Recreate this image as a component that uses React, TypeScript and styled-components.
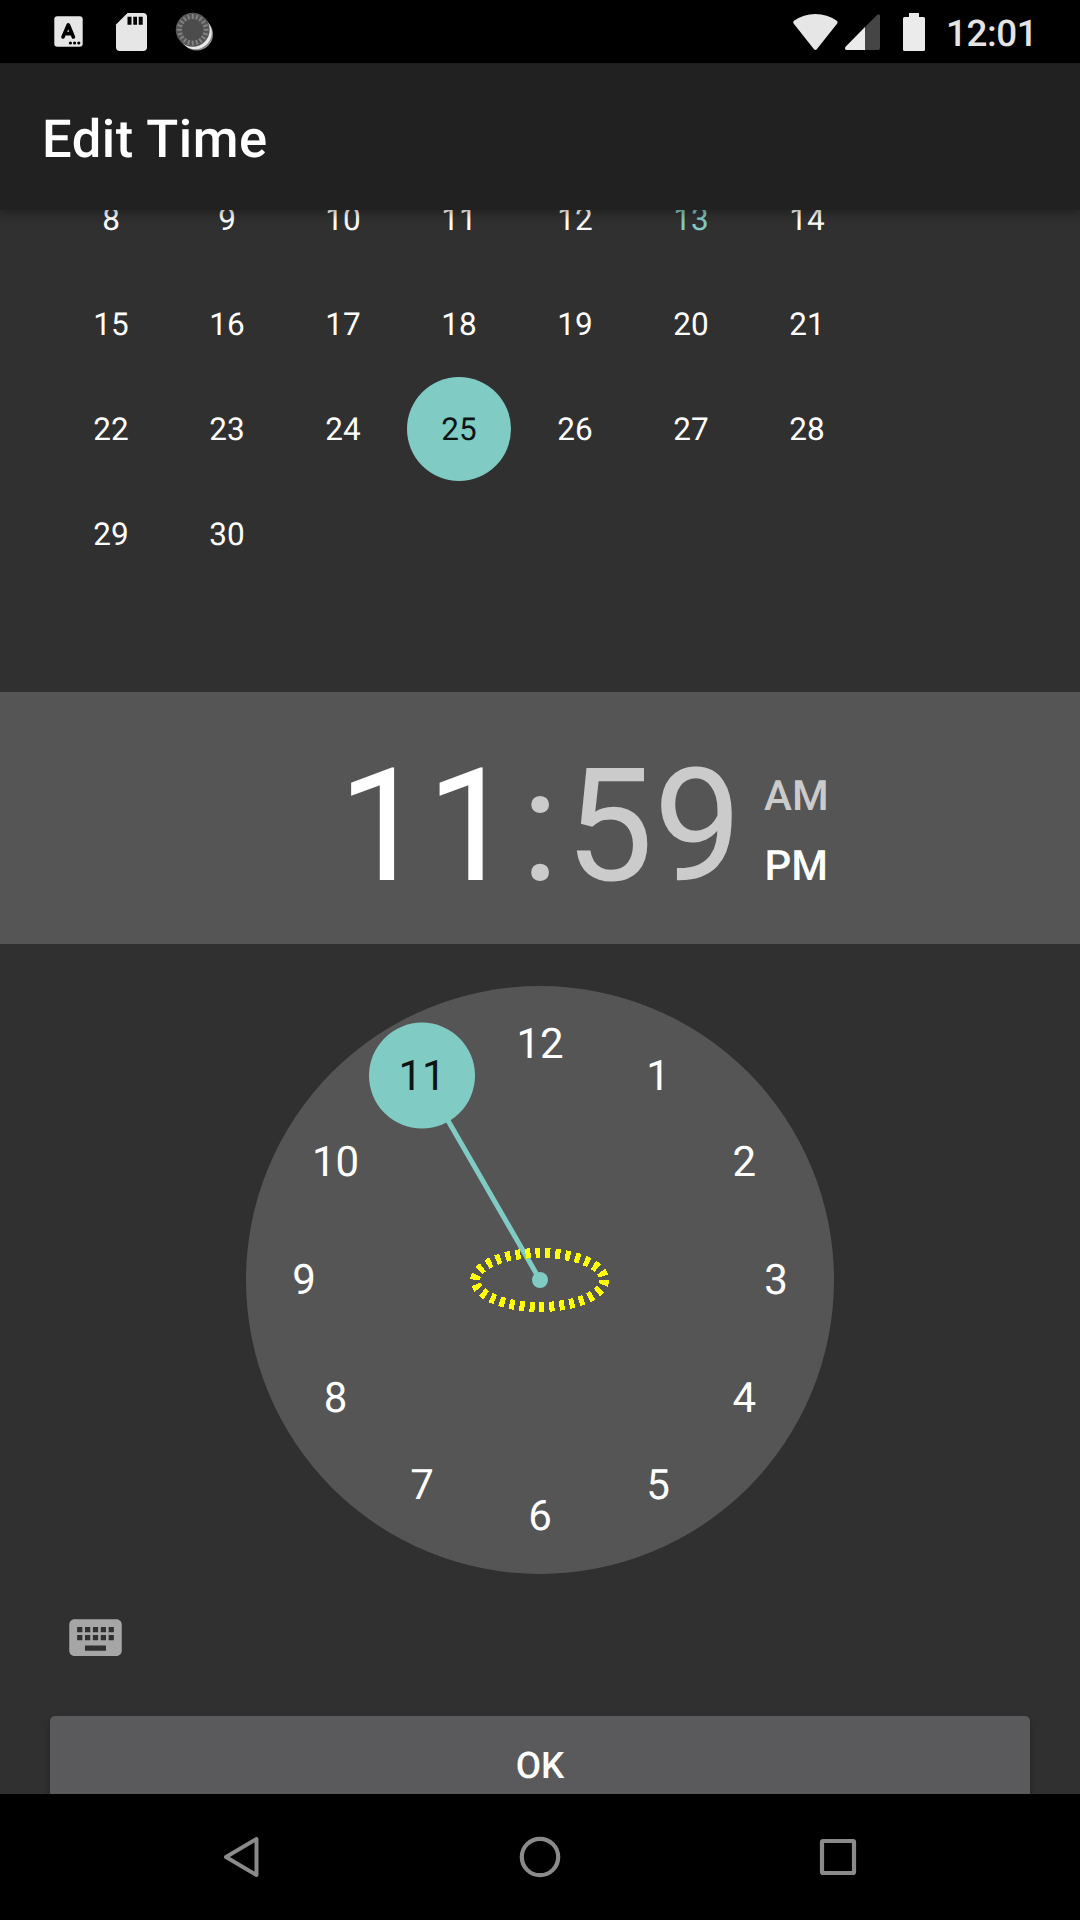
import React from "react";
import styled, { createGlobalStyle } from "styled-components";

const GlobalStyle = createGlobalStyle`
  * { box-sizing: border-box; }
  body { margin: 0; background: #000; }
`;

const ACCENT = "#80cbc4";

const Screen = styled.div`
  width: 1080px;
  height: 1920px;
  display: flex;
  flex-direction: column;
  overflow: hidden;
  background: #303030;
  color: #fff;
  font-family: Roboto, "Noto Sans", sans-serif;
  text-rendering: geometricPrecision;
`;

const StatusBar = styled.header`
  flex: none;
  height: 63px;
  padding: 0 44px 0 54px;
  display: flex;
  align-items: center;
  justify-content: space-between;
  background: #000;
`;

const IconGroup = styled.div<{ $gap: number }>`
  display: flex;
  align-items: center;
  gap: ${(p) => p.$gap}px;
`;

const Clock = styled.span`
  width: 90px;
  margin-left: 14px;
  padding-top: 4px;
  font-size: 36.75px;
  line-height: 44px;
  font-weight: 500;
  letter-spacing: -0.4px;
  color: #e4e4e4;
`;

const Glyph = styled.svg`
  display: block;
  flex: none;
  overflow: visible;
`;

const AppBar = styled.div`
  flex: none;
  position: relative;
  z-index: 1;
  height: 147px;
  padding: 4px 42px 0;
  display: flex;
  align-items: center;
  background: #212121;
  box-shadow: 0 4px 10px rgba(0, 0, 0, 0.32);
`;

const Title = styled.h1`
  margin: 0;
  font-size: 52.5px;
  font-weight: 500;
  letter-spacing: 0.55px;
`;

const Content = styled.main`
  flex: 1;
  min-height: 0;
  display: flex;
  flex-direction: column;
  overflow: hidden;
`;

const Calendar = styled.section`
  flex: none;
  height: 482px;
`;

const Month = styled.div`
  margin: -43.5px 0 0 53px;
  display: grid;
  grid-template-columns: repeat(7, 116px);
  grid-auto-rows: 105px;
  place-items: center;
`;

const Day = styled.div<{ $selected?: boolean; $today?: boolean }>`
  width: 104px;
  height: 104px;
  border-radius: 50%;
  display: flex;
  align-items: center;
  justify-content: center;
  font-size: 31.5px;
  background: ${(p) => (p.$selected ? ACCENT : "transparent")};
  color: ${(p) => (p.$selected ? "#0d1414" : p.$today ? ACCENT : "#fff")};
`;

const TimeHeader = styled.section`
  flex: none;
  height: 252px;
  padding-top: 43px;
  display: grid;
  grid-template-columns: 1fr 50px 1fr;
  align-items: start;
  background: #555;
`;

const TimePart = styled.span<{ $active?: boolean; $align?: string }>`
  font-size: 157.5px;
  line-height: 184px;
  text-align: ${(p) => p.$align ?? "left"};
  color: ${(p) => (p.$active ? "#fff" : "#cbcbcb")};
`;

const MinuteSide = styled.div`
  display: flex;
  align-items: flex-start;
`;

const Periods = styled.div`
  margin-left: 22px;
  padding-top: 27px;
  display: flex;
  flex-direction: column;
  align-items: center;
`;

const Period = styled.span<{ $active?: boolean }>`
  font-size: 42px;
  line-height: 70px;
  font-weight: 500;
  color: ${(p) => (p.$active ? "#fff" : "#cbcbcb")};
`;

const DialArea = styled.section`
  flex: none;
  padding-top: 42px;
  display: flex;
  justify-content: center;
`;

const DialText = styled.text<{ $active?: boolean }>`
  font-size: 42px;
  text-anchor: middle;
  fill: ${(p) => (p.$active ? "#0d1414" : "#fff")};
`;

const InputModeRow = styled.div`
  flex: none;
  padding: 32px 0 0 64px;
`;

const ButtonRow = styled.div`
  flex: none;
  padding: 47px 50px 0;
`;

const OkButton = styled.button`
  display: block;
  width: 100%;
  height: 98px;
  padding: 0;
  border: 0;
  border-radius: 5px;
  background: #5a5a5c;
  color: #fff;
  font: 500 36.75px Roboto, sans-serif;
  text-rendering: inherit;
  box-shadow: 0 5px 7px rgba(0, 0, 0, 0.3);
`;

const NavBar = styled.nav`
  flex: none;
  height: 126px;
  display: grid;
  grid-template-columns: repeat(3, 298px);
  justify-content: center;
  place-items: center;
  background: #000;
`;

const DAYS = Array.from({ length: 23 }, (_, i) => i + 8);
const HOURS = [12, 1, 2, 3, 4, 5, 6, 7, 8, 9, 10, 11];
const SELECTED_HOUR = 11;
const NUMBER_RADIUS = 236;

const hourPoint = (hour: number) => {
  const angle = (hour * Math.PI) / 6;
  return {
    x: 294 + NUMBER_RADIUS * Math.sin(angle),
    y: 294 - NUMBER_RADIUS * Math.cos(angle),
  };
};

function KeyboardLanguageIcon() {
  return (
    <Glyph width="29" height="31" viewBox="0 0 29 31">
      <rect x="0.3" y="0.3" width="28.4" height="30.4" rx="3" fill="#e6e6e6" />
      <path d="M9 21 L14.3 8.8 L19.4 21 M10.6 17.6 H18" fill="none" stroke="#000" strokeWidth="3.6" strokeLinecap="round" strokeLinejoin="round" />
      <g fill="#000">
        <circle cx="16.4" cy="27" r="1.6" />
        <circle cx="20.6" cy="27" r="1.6" />
        <circle cx="24.8" cy="27" r="1.6" />
      </g>
    </Glyph>
  );
}

function SdCardIcon() {
  return (
    <Glyph width="31" height="38" viewBox="0 0 31 38">
      <path d="M11.5 0 H27 Q31 0 31 4 V34 Q31 38 27 38 H4 Q0 38 0 34 V11.5 Z" fill="#e6e6e6" />
      <path d="M11.5 3.7 h4 v8 h-4z M17.3 3.7 h3.7 v8 h-3.7z M22.7 3.7 h4 v8 h-4z" fill="#000" />
    </Glyph>
  );
}

function SyncDialIcon() {
  const ticks = Array.from({ length: 20 }, (_, i) => i * 18);
  return (
    <Glyph width="33" height="38" viewBox="4 0 33 38">
      <circle cx="20.7" cy="21.2" r="16.3" fill="#8a8a8a" />
      <circle cx="19.2" cy="19.7" r="16.5" fill="#e8e8e8" />
      <circle cx="16.7" cy="16.8" r="17" fill="#555" />
      {ticks.map((a) => (
        <line key={a} x1="16.7" y1="1" x2="16.7" y2="6.3" stroke="#848484" strokeWidth="1.8" transform={`rotate(${a} 16.7 16.8)`} />
      ))}
      <circle cx="16.7" cy="16.8" r="10.8" fill="#4c4c4c" />
    </Glyph>
  );
}

function Dial() {
  const hand = hourPoint(SELECTED_HOUR);
  return (
    <Glyph width="588" height="588" viewBox="0 0 588 588">
      <circle cx="294" cy="294" r="294" fill="#555" />
      <line x1="294" y1="294" x2={hand.x} y2={hand.y} stroke={ACCENT} strokeWidth="5" />
      <circle cx={hand.x} cy={hand.y} r="53" fill={ACCENT} />
      {HOURS.map((h) => {
        const p = hourPoint(h);
        return (
          <DialText key={h} x={p.x} y={p.y + 14.2} $active={h === SELECTED_HOUR}>
            {h}
          </DialText>
        );
      })}
      <ellipse cx="293.7" cy="294" rx="64.5" ry="27" fill="none" stroke="#ff0" strokeWidth="10" strokeDasharray="5 5" shapeRendering="crispEdges" />
      <circle cx="294" cy="294" r="8" fill={ACCENT} />
    </Glyph>
  );
}

export default function App() {
  return (
    <Screen>
      <GlobalStyle />
      <StatusBar>
        <IconGroup $gap={33}>
          <KeyboardLanguageIcon />
          <SdCardIcon />
          <SyncDialIcon />
        </IconGroup>
        <IconGroup $gap={7}>
          <Glyph width="45" height="36" viewBox="0 0 45 36">
            <path d="M22.4 36 Q21.5 36 20.8 35 L0.6 9.6 Q-0.6 8 1 6.8 Q10.5 0 22.4 0 Q34.3 0 43.8 6.8 Q45.4 8 44.2 9.6 L24 35 Q23.3 36 22.4 36Z" fill="#e6e6e6" />
          </Glyph>
          <Glyph width="35" height="36" viewBox="0 0 35 36">
            <path d="M32.3 0.8 Q35 -0.8 35 2 V34 Q35 36 33 36 H20 V13.1Z" fill="#454545" />
            <path d="M20 13.1 V36 H1.5 Q-0.6 35.6 0.3 33 Z" fill="#ebebeb" />
          </Glyph>
          <Glyph width="38" height="38" viewBox="-8 0 38 38">
            <path d="M6 0 H16 V4 H20.5 Q22 4 22 5.5 V36.5 Q22 38 20.5 38 H1.5 Q0 38 0 36.5 V5.5 Q0 4 1.5 4 H6Z" transform="translate(8 0)" fill="#ebebeb" />
          </Glyph>
          <Clock>12:01</Clock>
        </IconGroup>
      </StatusBar>
      <AppBar>
        <Title>Edit Time</Title>
      </AppBar>
      <Content>
        <Calendar>
          <Month>
            {DAYS.map((d) => (
              <Day key={d} $selected={d === 25} $today={d === 13}>
                {d}
              </Day>
            ))}
          </Month>
        </Calendar>
        <TimeHeader>
          <TimePart $active $align="right">11</TimePart>
          <TimePart $align="center">:</TimePart>
          <MinuteSide>
            <TimePart>59</TimePart>
            <Periods>
              <Period>AM</Period>
              <Period $active>PM</Period>
            </Periods>
          </MinuteSide>
        </TimeHeader>
        <DialArea>
          <Dial />
        </DialArea>
        <InputModeRow>
          <Glyph width="63" height="63" viewBox="0 0 24 24">
            <path
              fill="#a6a6a6"
              d="M20 5H4c-1.1 0-1.99.9-1.99 2L2 17c0 1.1.9 2 2 2h16c1.1 0 2-.9 2-2V7c0-1.1-.9-2-2-2zm-9 3h2v2h-2V8zm0 3h2v2h-2v-2zM8 8h2v2H8V8zm0 3h2v2H8v-2zm-1 2H5v-2h2v2zm0-3H5V8h2v2zm9 7H8v-2h8v2zm0-4h-2v-2h2v2zm0-3h-2V8h2v2zm3 3h-2v-2h2v2zm0-3h-2V8h2v2z"
            />
          </Glyph>
        </InputModeRow>
        <ButtonRow>
          <OkButton>OK</OkButton>
        </ButtonRow>
      </Content>
      <NavBar>
        <Glyph width="36" height="40" viewBox="0 0 36 40">
          <path d="M32.5 2 V38 L2 20Z" fill="none" stroke="#8a8a8a" strokeWidth="4" strokeLinejoin="round" />
        </Glyph>
        <Glyph width="42" height="42" viewBox="0 0 42 42">
          <circle cx="21" cy="21" r="18.2" fill="none" stroke="#8a8a8a" strokeWidth="4.2" />
        </Glyph>
        <Glyph width="36" height="36" viewBox="0 0 36 36">
          <rect x="2" y="2" width="32" height="32" rx="1" fill="none" stroke="#8a8a8a" strokeWidth="4.2" />
        </Glyph>
      </NavBar>
    </Screen>
  );
}
